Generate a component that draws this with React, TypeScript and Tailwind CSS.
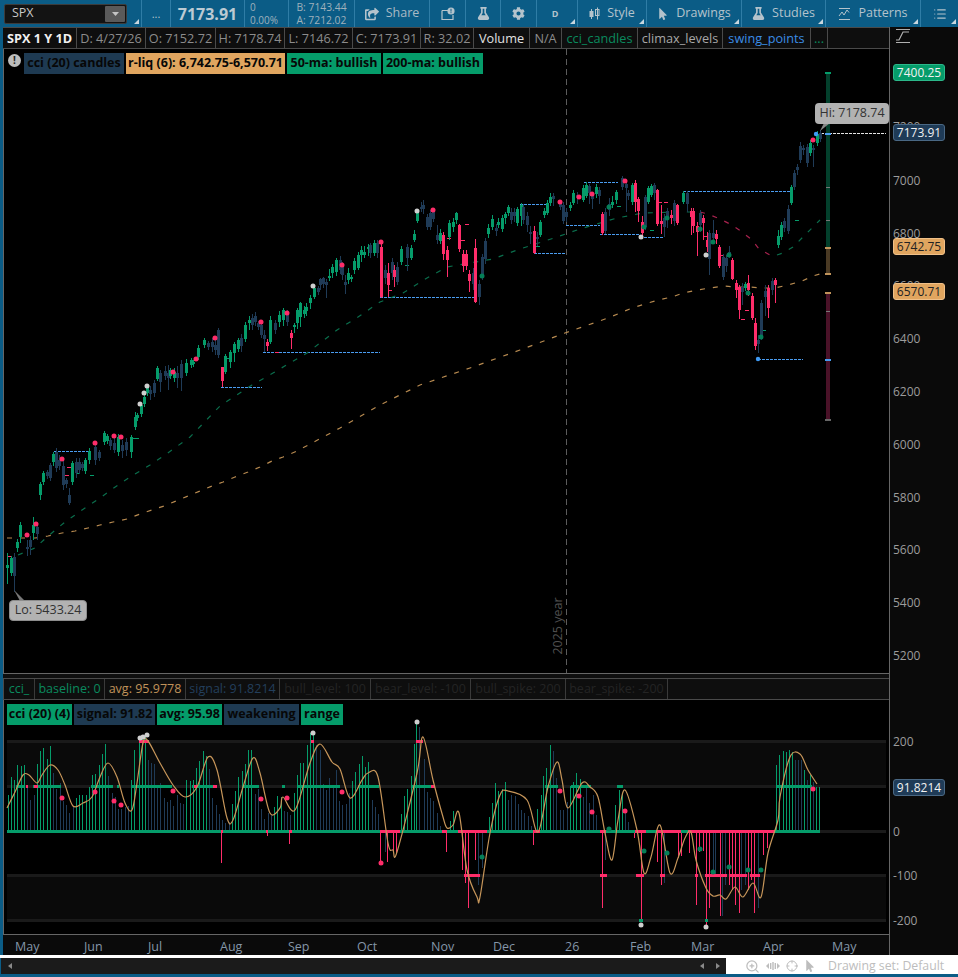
import React from "react";
import { FaFlask, FaCog, FaMousePointer, FaShareSquare } from "react-icons/fa";
import { ZoomIn, Crosshair, List } from "lucide-react";

type C = [number, number, number, string, number?, number?];
const G = "#059c6a", N = "#1f3b57", R = "#ff2d6a";
const candles: C[] = [
  [7,565,568,"g",553,584],[11,558,573,"g"],[14,557,576,"n",553,592],[17,542,548,"g",539,552],[20,525,537,"g",522,543],[27,547,549,"n",540,556],[30,540,547,"n",536,555],[33,525,533,"g",517,540],[37,527,534,"n",522,540],
  [40,484,495,"g",482,500],[43,473,482,"g"],[47,472,476,"n"],[50,465,478,"n"],[53,454,462,"g",452,466],[56,452,468,"n",448,472],[59,460,466,"n",455,470],[63,466,485,"n",460,490],[66,480,484,"n",478,488],[69,495,503,"n",488,505],[72,463,482,"g"],[76,462,473,"n",458,478],[79,462,470,"n",458,474],[82,464,468,"n"],[85,460,471,"g"],[89,451,460,"g",448,464],[95,447,460,"n",444,465],[99,452,458,"n"],[104,433,442,"g"],[107,436,441,"g"],[110,440,446,"n",438,450],[114,443,450,"n",438,453],[118,437,452,"g",434,456],[122,445,451,"n",440,458],[126,442,450,"n",438,456],[131,437,452,"g",435,458],
  [135,417,427,"g",412,430],[137,415,418,"g"],[141,405,414,"g"],[144,397,404,"g"],[147,388,393,"g"],[150,390,394,"n",386,400],[154,383,393,"n",380,397],[157,368,379,"g",366,381],[160,373,382,"n",370,392],[165,371,376,"n",366,380],[168,373,378,"n",365,390],[170,370,376,"g"],[174,372,378,"g",368,382],[177,373,378,"n",366,388],[181,364,378,"n",360,391],[186,363,373,"g",359,376],[191,360,365,"g"],[193,362,364,"g"],[198,348,357,"g",345,360],[204,340,345,"g"],[208,343,347,"n"],[212,342,347,"n",338,352],[215,345,350,"n",340,355],[218,330,355,"n",328,358],
  [222,367,381,"r",367,387],[225,356,372,"g",354,374],[230,352,362,"g",350,368],[234,344,353,"g",342,362],[238,340,349,"g"],[241,338,346,"n",334,352],[245,325,339,"g",322,342],[249,320,323,"g",316,330],[252,318,325,"n",314,330],[255,316,322,"n",312,326],[258,323,327,"n"],[261,325,335,"n",322,338],[264,335,339,"n",330,352],[267,342,346,"r",339,351],[270,320,342,"g",316,344],[275,323,330,"n",320,334],[279,315,322,"g",311,327],[283,310,320,"g",308,326],[287,315,322,"n",310,326],[291,333,338,"r",330,349],[294,325,327,"g",323,333],[297,310,323,"g",308,329],[300,303,317,"g",302,327],[304,310,314,"g",306,318],[306,307,311,"g",303,316],[310,298,303,"g",295,309],[314,288,297,"g",286,299],[318,288,292,"n"],[320,279,285,"n",278,290],[323,278,284,"n",277,288],[326,282,285,"n",279,298],[329,276,278,"g",269,281],[332,267,273,"g",264,278],[336,260,272,"g",258,276],[340,260,270,"n",256,274],[342,265,275,"n",262,280],[345,282,285,"n",275,294],[348,273,280,"g",268,284],[351,277,279,"g"],[354,261,270,"g",258,274],[358,255,268,"g",252,270],[361,250,255,"g",246,262],[364,252,255,"g",246,258],[368,247,249,"g",244,256],[370,245,253,"n",243,258],[374,243,253,"g",240,256],[377,243,253,"n",240,258],
  [381,247,297,"r",242,298],[385,270,278,"n",265,284],[388,273,285,"r",263,297],[392,262,273,"n",258,280],[394,270,277,"r",265,287],[397,267,282,"n",262,285],[401,249,262,"g",246,265],[407,247,258,"n",244,271],[411,248,258,"g",245,260],[414,234,240,"g",230,242],[417,212,221,"g",210,223],[421,207,209,"n",202,212],[423,205,209,"n",200,214],[427,217,227,"n",214,230],[430,213,227,"n",210,230],[433,212,219,"n",208,222],[437,235,240,"n",225,244],[440,233,241,"g",229,244],[443,235,254,"r",232,260],[447,250,260,"r",246,277],[449,223,237,"g",220,240],[453,222,227,"g",218,232],[456,213,220,"g",212,224],[459,225,249,"r",224,252],[463,254,266,"r",250,272],[466,254,266,"r",250,270],[469,274,281,"r",270,292],[473,273,284,"n",268,290],[475,248,302,"r",239,303],[479,284,297,"n",280,305],[482,257,275,"n",254,280],[485,241,259,"n",238,264],[488,228,234,"g",224,238],[492,219,227,"g",215,230],[496,228,231,"n",224,236],[498,222,225,"g",218,228],[502,218,229,"g",215,232],[505,214,218,"g",212,224],[508,207,213,"g",205,216],[511,212,220,"n",208,224],[514,212,216,"n",208,222],[517,209,223,"g",207,226],[521,205,216,"g",203,226],[523,207,220,"n",204,224],[527,216,225,"n",212,232],[530,232,234,"n",226,244],[534,231,253,"r",226,254],[537,237,239,"n",232,246],[540,222,235,"g",220,237],[544,211,215,"g",208,218],[547,203,213,"g",200,215],[550,197,203,"g",193,206],[553,196,199,"n",193,206],[560,204,207,"n",200,210],[563,205,221,"n",202,224],[566,212,217,"n",208,222],
  [570,205,208,"g",202,211],[573,193,203,"g",190,205],[577,195,198,"n",192,204],[583,188,200,"g",185,202],[586,185,196,"g",182,198],[589,186,193,"n",184,204],[592,195,199,"n",192,209],[596,187,194,"g",184,198],[599,190,196,"n",187,204],[602,214,233,"r",212,235],[605,212,231,"n",208,234],[609,204,210,"n",198,216],[612,202,205,"g",196,208],[616,192,200,"g",190,204],[622,178,187,"n",176,190],[626,184,188,"n",180,212],[628,193,196,"n",190,200],[632,185,202,"g",183,205],[635,183,202,"r",180,212],[638,199,211,"r",197,222],[642,222,233,"r",216,236],[645,197,227,"n",195,230],[648,188,202,"g",186,204],[651,186,195,"g",184,197],[654,185,193,"n",183,200],[657,190,224,"r",189,226],[661,221,224,"r",205,234],[664,218,227,"n",214,237],[667,211,220,"n",208,228],[671,215,218,"r",210,224],[674,203,221,"n",200,226],[677,205,223,"r",204,225],
  [683,193,202,"g",191,204],[687,193,204,"n",191,212],[691,211,217,"r",208,235],[693,211,226,"r",208,233],[697,226,232,"r",222,256],[700,213,225,"n",210,232],[703,218,223,"r",215,240],[707,240,247,"r",232,252],[709,233,259,"n",230,275],[713,233,238,"n",220,242],[716,234,239,"r",230,244],[719,247,266,"r",245,268],[723,257,277,"n",254,280],[726,258,266,"n",255,272],[729,252,255,"n",246,258],[732,260,279,"r",258,280],[736,283,290,"r",280,298],[739,287,310,"r",285,319],[742,287,292,"n",283,305],[745,284,288,"g"],[748,283,290,"r",275,296],[752,296,318,"r",293,320],[755,323,346,"r",318,350],[758,340,344,"n",335,353],[761,303,337,"n",300,340],[765,291,297,"n",285,316],[768,288,308,"r",285,318],[772,281,290,"n",278,295],[775,280,285,"r",278,303],[778,236,245,"g",230,248],[781,225,237,"g",222,240],[784,221,228,"n",218,232],[788,209,231,"n",205,234],[791,187,203,"g",185,205],[794,173,187,"n",170,190],[797,167,170,"n",164,175],[800,146,160,"n",142,163],[803,148,150,"n",145,155],[807,147,163,"n",144,167],[810,143,153,"g",140,156],[813,148,150,"n",145,167],[817,134,143,"g",131,146],[820,133,139,"n",130,142],
];
const col = (c: string) => (c === "g" ? G : c === "n" ? N : R);

const ma50A = "18,555 35,548 47,537 65,522 85,508 100,498 118,485 130,477 150,465 165,455 190,437 220,406 252,385 273,373 307,353 337,330 358,317 380,302 403,293 427,278 447,267 493,259 520,249 557,237 580,229 617,218 643,213 680,212 700,212";
const ma50R = "700,212 708,214 720,219 732,225 742,232 752,240 759,249 770,255 777,255";
const ma50B = "777,255 783,253 793,247 803,237 812,228 820,220";
const ma200 = "7,538 35,538 48,536 62,533 75,531 88,528 100,525 113,522 127,519 140,514 152,510 164,506 176,501 188,496 200,491 212,486 223,482 235,477 248,472 260,467 272,461 283,457 297,451 340,428 380,405 420,385 470,368 520,350 565,333 608,318 620,313 632,308 645,304 658,300 672,297 683,293 697,290 710,288 723,286 737,287 750,287 762,288 775,288 788,285 802,281 813,276 823,273";

const swing: [number, number, number][] = [[380,475,297],[534,566,253],[520,547,204],[566,600,225],[600,640,234],[640,663,237],[584,618,182],[263,380,352],[221,262,387],[54,90,451],[683,790,191],[758,803,359]];
const pinkDots = [[36,524],[27,535],[62,459],[95,443],[114,436],[121,437],[173,372],[196,359],[215,338],[261,322],[287,313],[342,265],[381,242],[433,210],[560,202],[579,197],[592,194],[625,181],[813,140]];
const whiteDots = [[140,404],[144,393],[147,386],[313,286],[417,211],[641,237],[706,255]];
const greenDots = [[482,276],[609,207],[644,227],[667,218],[700,229],[713,242],[729,255],[748,293],[761,337]];
const ticks: [number, number, string][] = [[7,556,R],[67,467,R],[65,475,R],[76,473,G],[133,438,G],[135,438,G],[90,475,G],[134,438,G],[275,352,R],[227,358,G],[405,265,G],[385,275,R],[388,290,R],[447,238,R],[465,224,R],[461,240,R],[536,246,G],[617,206,G],[704,236,R],[720,255,R],[664,202,R],[658,202,R],[745,310,R],[762,330,G],[795,220,G],[650,230,G],[741,319,R]];

const avg: [number, number][] = [[7,808],[15,792],[23,775],[29,775],[37,783],[42,775],[50,765],[58,770],[65,785],[73,806],[83,803],[92,797],[100,777],[108,763],[117,777],[125,803],[132,810],[137,783],[143,743],[148,741],[160,763],[173,785],[185,797],[197,787],[208,757],[217,770],[227,818],[233,820],[243,787],[253,758],[260,773],[270,813],[280,808],[283,797],[295,810],[310,763],[320,744],[332,762],[340,769],[350,798],[362,780],[368,773],[378,777],[388,843],[393,850],[397,852],[417,773],[423,737],[433,780],[443,817],[447,828],[453,825],[459,813],[467,870],[477,897],[480,897],[490,833],[500,795],[508,791],[527,800],[538,832],[548,787],[557,762],[562,780],[568,808],[582,783],[590,787],[598,797],[605,833],[612,860],[618,820],[625,790],[637,830],[644,873],[651,857],[660,825],[670,873],[678,858],[685,838],[691,832],[696,860],[706,888],[713,896],[720,895],[726,899],[735,887],[743,897],[753,883],[761,897],[768,853],[778,820],[780,797],[790,757],[800,754],[808,770],[817,784]];
const curve = (x: number) => {
  for (let i = 1; i < avg.length; i++) {
    if (x <= avg[i][0]) {
      const [a, b] = avg[i - 1];
      const [c, d] = avg[i];
      return b + ((x - a) / (c - a)) * (d - b);
    }
  }
  return avg[avg.length - 1][1];
};
const smooth = (pts: [number, number][]) => {
  let d = `M${pts[0][0]},${pts[0][1]}`;
  for (let i = 0; i < pts.length - 1; i++) {
    const p0 = pts[Math.max(0, i - 1)], p1 = pts[i], p2 = pts[i + 1], p3 = pts[Math.min(pts.length - 1, i + 2)];
    const c1x = p1[0] + (p2[0] - p0[0]) / 6, c1y = p1[1] + (p2[1] - p0[1]) / 6;
    const c2x = p2[0] - (p3[0] - p1[0]) / 6, c2y = p2[1] - (p3[1] - p1[1]) / 6;
    d += ` C${c1x.toFixed(1)},${c1y.toFixed(1)} ${c2x.toFixed(1)},${c2y.toFixed(1)} ${p2[0]},${p2[1]}`;
  }
  return d;
};
const rnd = (i: number) => {
  const v = Math.sin(i * 12.9898) * 43758.5453;
  return v - Math.floor(v);
};
const negBars: [number, number, string][] = [[221,863,R],[267,836,R],[289,844,R],[380,862,R],[387,862,R],[393,852,R],[396,853,R],[385,852,N],[442,833,R],[446,852,R],[462,870,R],[465,883,R],[468,908,R],[475,860,R],[478,885,N],[482,868,N],[533,845,R],[602,908,R],[605,860,N],[634,838,R],[641,922,R],[657,862,R],[661,885,R],[664,883,N],[678,858,R],[681,856,R],[689,853,R],[696,905,R],[699,852,R],[703,851,R],[706,925,R],[709,908,R],[713,875,N],[715,875,N],[720,916,R],[722,916,N],[725,885,N],[729,885,R],[732,890,R],[735,905,R],[739,913,R],[741,890,N],[745,885,N],[748,890,R],[751,880,R],[754,913,R],[758,908,N],[763,855,R],[767,848,R]];
const peaks: [number, number, string][] = [[139,739,G],[142,738,G],[145,737,G],[148,760,N],[313,733,G],[316,745,N],[416,722,G],[419,727,N],[550,745,G],[553,751,N],[546,768,G],[543,776,G],[556,778,N],[776,765,G],[779,755,G],[783,751,G],[786,752,G],[789,750,G],[792,752,G],[795,760,N],[798,760,N],[801,760,N],[804,770,G],[807,780,N],[810,775,G],[813,782,N],[816,787,G],[819,787,G]];
type Bar = { x: number; y: number; c: string };
const posBars: Bar[] = (() => {
  const out: Bar[] = [];
  for (let x = 7.5, i = 0; x < 690; x += 3.25, i++) {
    const rx = Math.round(x);
    const ahead = curve(x + 5);
    const rising = curve(x + 4) <= curve(x - 2);
    if (ahead >= 826) continue;
    if (peaks.some(p => Math.abs(p[0] - rx) < 2)) continue;
    if (negBars.some(p => Math.abs(p[0] - rx) < 1)) continue;
    const h = 831 - ahead;
    const k = rising ? 1.05 + rnd(i) * 0.3 : 0.55 + rnd(i) * 0.5;
    out.push({ x: rx, y: Math.max(725, 831 - h * k), c: rising ? G : N });
  }
  peaks.forEach(p => out.push({ x: p[0], y: p[1], c: p[2] }));
  return out;
})();

const zero: [number, number, string][] = [[7,221,G],[221,223,R],[223,266,G],[266,268,R],[268,289,G],[289,292,R],[292,380,G],[380,400,R],[400,442,G],[442,447,R],[447,458,G],[458,487,R],[487,533,G],[533,540,R],[540,600,G],[600,606,R],[606,635,G],[635,646,R],[646,657,G],[657,681,R],[681,688,G],[688,775,R],[775,820,G]];
const hund: [number, number, string][] = [[16,25,G],[26,28,R],[33,61,G],[34,38,R],[91,113,G],[117,119,G],[132,172,G],[192,194,G],[194,197,R],[197,214,G],[213,217,R],[243,259,G],[282,285,G],[298,340,G],[358,379,G],[412,431,G],[431,435,R],[545,558,G],[571,579,G],[581,591,G],[617,623,G],[776,812,G]];
const mhund: [number, number, string][] = [[464,480,R],[600,607,R],[636,644,R],[660,665,R],[695,698,R],[705,727,R],[730,747,R],[750,760,R]];
const p200: [number, number, string][] = [[139,149,R],[311,314,R],[416,423,R]];
const m200: [number, number, string][] = [[639,643,G],[705,708,G]];
const ciPink = [[62,798],[95,792],[114,801],[121,805],[173,791],[261,799],[287,798],[342,792],[560,791],[579,796],[592,812],[625,811],[813,789],[381,863]];
const ciGreen = [[482,857],[644,851],[667,853],[700,849],[713,872],[729,867],[748,870],[761,870],[609,829]];
const ciWhite = [[140,738],[143,737],[147,735],[313,733],[417,722],[641,925],[706,927]];

const levels = [741, 786, 831, 875, 920];

function Corner() {
  return (
    <svg width="5" height="5" className="absolute right-[2px] bottom-[3px]">
      <polygon points="5,0 5,5 0,5" fill="#c8d6de" />
    </svg>
  );
}
function Cell({ w, corner, children }: { w: string; corner?: boolean; children: React.ReactNode }) {
  return (
    <div className={`relative flex items-center justify-center gap-[7px] h-full border-r border-[#2f7da6] text-[12.5px] text-[#b4c3cc] ${w}`}>
      {children}
      {corner && <Corner />}
    </div>
  );
}

const head: [string, string][] = [
  ["SPX 1 Y 1D", "w-[74px] font-bold text-[#f0f0f0]"],
  ["D: 4/27/26", "w-[69px] text-[#8c8c8c]"],
  ["O: 7152.72", "w-[70px] text-[#8c8c8c]"],
  ["H: 7178.74", "w-[69px] text-[#8c8c8c]"],
  ["L: 7146.72", "w-[68px] text-[#8c8c8c]"],
  ["C: 7173.91", "w-[68px] text-[#8c8c8c]"],
  ["R: 32.02", "w-[53px] text-[#8c8c8c]"],
  ["Volume", "w-[56px] text-[#e2e2e2]"],
  ["N/A", "w-[32px] text-[#8c8c8c]"],
  ["cci_candles", "w-[76px] text-[#0a8a5e]"],
  ["climax_levels", "w-[85px] text-[#a8a8a8]"],
  ["swing_points", "w-[88px] text-[#3b8de6]"],
  ["...", "w-[17px] text-[#0a8a5e]"],
];
const legend: [string, string][] = [
  ["cci_", "w-[31px] text-[#0a8a5e]"],
  ["baseline: 0", "w-[70px] text-[#0a8a5e]"],
  ["avg: 95.9778", "w-[81px] text-[#c0935a]"],
  ["signal: 91.8214", "w-[94px] text-[#233f5c]"],
  ["bull_level: 100", "w-[91px] text-[#242424]"],
  ["bear_level: -100", "w-[100px] text-[#242424]"],
  ["bull_spike: 200", "w-[95px] text-[#242424]"],
  ["bear_spike: -200", "w-[102px] text-[#242424]"],
];
const axisTicks: [string, number][] = [["7200",127],["7000",181],["6800",234],["6600",286],["6400",339],["6200",392],["6000",445],["5800",498],["5600",550],["5400",603],["5200",656],["200",742],["0",832],["-100",876],["-200",921]];
const axisBadges: [string, number, string][] = [
  ["7400.25",72,"bg-[#059c6a] border-[#2cb88a] text-[#f2f2f2]"],
  ["7173.91",132,"bg-[#1f3b57] border-[#4a6884] text-[#f2f2f2]"],
  ["6742.75",246,"bg-[#e0a55f] border-[#f0c088] text-[#222]"],
  ["6570.71",291,"bg-[#e0a55f] border-[#f0c088] text-[#222]"],
  ["91.8214",787,"bg-[#1f3b57] border-[#4a6884] text-[#f2f2f2]"],
];
const months: [string, number][] = [["May",15],["Jun",84],["Jul",148],["Aug",220],["Sep",288],["Oct",357],["Nov",431],["Dec",493],["26",565],["Feb",630],["Mar",691],["Apr",763],["May",832]];
const badge = "h-[21px] flex items-center justify-center whitespace-nowrap text-[12.5px] font-bold text-[#070707]";

function Segs({ y, list }: { y: number; list: [number, number, string][] }) {
  return (
    <>
      {list.map((s, i) => (
        <rect key={i} x={s[0]} y={y - 1.5} width={s[1] - s[0]} height={3} fill={s[2]} />
      ))}
    </>
  );
}
function Dots({ list, fill, r = 2.5 }: { list: number[][]; fill: string; r?: number }) {
  return (
    <>
      {list.map((d, i) => (
        <circle key={i} cx={d[0]} cy={d[1]} r={r} fill={fill} />
      ))}
    </>
  );
}

export default function App() {
  return (
    <div className="w-[958px] h-[977px] overflow-hidden flex flex-col bg-[#0b5c86] font-['Open_Sans',sans-serif] leading-none">
      {/* toolbar */}
      <div className="h-[27px] flex items-stretch">
        <div className="relative w-[142px] h-full flex items-center pl-[4px] border-r border-[#2f7da6]">
          <div className="w-[123px] h-[20px] bg-[#131313] border border-[#3c3c3c] rounded-[2px] flex items-center justify-between pl-[7px] pr-[1px]">
            <span className="text-[12.5px] text-[#c8c8c8]">SPX</span>
            <span className="w-[20px] h-[16px] bg-[#5a5a5a] rounded-[1px] flex items-center justify-center">
              <svg width="7" height="4"><polygon points="0,0 7,0 3.5,4" fill="#c4c4c4" /></svg>
            </span>
          </div>
          <Corner />
        </div>
        <Cell w="w-[29px]"><span className="text-[#b4c3cc] text-[11px]">...</span></Cell>
        <Cell w="w-[74px]"><span className="text-[16px] font-bold text-[#bccad3]">7173.91</span></Cell>
        <Cell w="w-[44px]">
          <div className="flex flex-col gap-[3px] w-[33px] text-[10px] text-[#9fb1bc]"><span>0</span><span>0.00%</span></div>
        </Cell>
        <Cell w="w-[66px]">
          <div className="flex flex-col gap-[3px] text-[10.3px] text-[#9fb1bc]"><span>B: 7143.44</span><span>A: 7212.02</span></div>
        </Cell>
        <Cell w="w-[75px]"><FaShareSquare size={14} color="#b4c3cc" /><span className="text-[#a9bac5]">Share</span></Cell>
        <Cell w="w-[36px]">
          <svg width="14" height="14" viewBox="0 0 14 14"><path d="M1 3.5h7M1 3.5v9h11V8" fill="none" stroke="#b4c3cc" strokeWidth="1.2" /><circle cx="10" cy="4" r="3.6" fill="#b4c3cc" /><rect x="9.5" y="1.8" width="1" height="2.8" fill="#0b5c86" /><rect x="9.5" y="5.2" width="1" height="1" fill="#0b5c86" /></svg>
        </Cell>
        <Cell w="w-[35px]"><FaFlask size={13} color="#b4c3cc" /></Cell>
        <Cell w="w-[36px]"><FaCog size={13} color="#b4c3cc" /></Cell>
        <Cell w="w-[41px]" corner><span className="text-[9px] font-bold mr-[4px]">D</span></Cell>
        <Cell w="w-[69px]" corner>
          <svg width="11" height="13" viewBox="0 0 11 13"><rect x="0.5" y="4" width="4" height="6" fill="#b4c3cc" /><rect x="2" y="2" width="1" height="10" fill="#b4c3cc" /><rect x="6.5" y="2.5" width="3.5" height="6" fill="none" stroke="#b4c3cc" /><rect x="8" y="0.5" width="1" height="12" fill="#b4c3cc" /></svg>
          <span>Style</span>
        </Cell>
        <Cell w="w-[95px]" corner><FaMousePointer size={12} color="#b4c3cc" /><span>Drawings</span></Cell>
        <Cell w="w-[84px]" corner><FaFlask size={13} color="#b4c3cc" /><span>Studies</span></Cell>
        <Cell w="w-[95px]" corner>
          <svg width="13" height="13" viewBox="0 0 13 13" fill="none" stroke="#b4c3cc"><path d="M1 1.5h11M1 12.5h11" /><path d="M1 9l3-4 2 3 3-5 2 2.5" /></svg>
          <span>Patterns</span>
        </Cell>
        <div className="relative flex-1 flex items-center justify-center"><List size={14} color="#b4c3cc" /><Corner /></div>
      </div>

      {/* main */}
      <div className="h-[928px] flex pl-[3px]">
        <div className="w-[886px] flex flex-col bg-black">
          <div className="h-[22px] flex items-stretch bg-[#0e0e0e] border-y border-[#4a4a4a] text-[12.7px]">
            {head.map(h => (
              <div key={h[0]} className={`flex items-center justify-center border-r border-[#4a4a4a] whitespace-nowrap ${h[1]}`}>{h[0]}</div>
            ))}
          </div>
          <div className="relative h-[625px] bg-black border-b border-l border-[#666]">
            <svg width="885" height="624" className="block" shapeRendering="crispEdges">
              <g transform="translate(-4,-49)">
                <line x1="566" y1="49" x2="566" y2="674" stroke="#5c5c5c" strokeDasharray="6 4" />
                {swing.map((s, i) => (
                  <line key={i} x1={s[0]} x2={s[1]} y1={s[2] + 0.5} y2={s[2] + 0.5} stroke="#4a9cf0" strokeDasharray="3 1" />
                ))}
                <line x1="821" x2="886" y1="133.5" y2="133.5" stroke="#e4e4e4" strokeDasharray="3 1" />
                <g shapeRendering="geometricPrecision" fill="none" strokeWidth="1.2" strokeDasharray="5 8">
                  <polyline points={ma50A} stroke="#0a6e4c" />
                  <polyline points={ma50R} stroke="#a8224e" />
                  <polyline points={ma50B} stroke="#0a6e4c" />
                  <polyline points={ma200} stroke="#b78a50" />
                </g>
                {ticks.map((t, i) => (
                  <rect key={i} x={t[0]} y={t[1]} width={4} height={1} fill={t[2]} />
                ))}
                {candles.map((c, i) => (
                  <g key={i} fill={col(c[3])}>
                    <rect x={c[0]} y={c[4] ?? c[1] - 2} width={1} height={(c[5] ?? c[2] + 3) - (c[4] ?? c[1] - 2)} />
                    <rect x={c[0] - 1} y={c[1]} width={3} height={Math.max(1, c[2] - c[1])} />
                  </g>
                ))}
                <rect x="826" y="73" width="4" height="174" fill="#03402c" />
                <rect x="826" y="247" width="4" height="26" fill="#4a3a24" />
                <rect x="826" y="292" width="4" height="128" fill="#4a1228" />
                <rect x="825" y="72" width="6" height="2" fill="#059c6a" />
                <rect x="826" y="187" width="4" height="1" fill="#777" />
                <rect x="826" y="220" width="4" height="1" fill="#777" />
                <rect x="825" y="247" width="6" height="2" fill="#c0935a" />
                <rect x="825" y="273" width="6" height="2" fill="#c0935a" />
                <rect x="825" y="292" width="6" height="2" fill="#c0935a" />
                <rect x="826" y="311" width="4" height="1" fill="#777" />
                <rect x="825" y="419" width="6" height="2" fill="#666" />
                <rect x="825" y="133" width="6" height="2" fill="#4a9cf0" />
                <rect x="825" y="359" width="6" height="2" fill="#4a9cf0" />
                <g shapeRendering="geometricPrecision">
                  <Dots list={pinkDots} fill="#ff2d6a" />
                  <Dots list={whiteDots} fill="#cfcfcf" />
                  <Dots list={greenDots} fill="#057f58" />
                  <Dots list={[[758,359],[816,134]]} fill="#3f9bf5" r={2.2} />
                  <polygon points="14,590 20,601 25,601" fill="#777" />
                  <polygon points="820,131 824,123 830,123" fill="#888" />
                </g>
              </g>
            </svg>
            <div className="absolute left-[4px] top-[4px] flex items-center gap-[2px]">
              <div className="w-[13px] h-[13px] -mt-[7px] mr-[1px] rounded-full bg-[#bdbdbd] flex items-center justify-center text-[10px] font-bold text-[#222]">!</div>
              <span className={`${badge} w-[100px] bg-[#1e3a52]`}>cci (20) candles</span>
              <span className={`${badge} w-[159px] bg-[#e0a55f]`}>r-liq (6): 6,742.75-6,570.71</span>
              <span className={`${badge} w-[94px] bg-[#059c6a]`}>50-ma: bullish</span>
              <span className={`${badge} w-[100px] bg-[#059c6a]`}>200-ma: bullish</span>
            </div>
            <div className="absolute left-[5px] top-[551px] w-[78px] h-[21px] rounded-[4px] bg-[#b2b2b2] border border-[#8c8c8c] flex items-center justify-center text-[12.5px] text-[#333]">Lo: 5433.24</div>
            <div className="absolute left-[811px] top-[54px] w-[74px] h-[21px] rounded-[4px] bg-[#b2b2b2] flex items-center justify-center text-[12.5px] text-[#333]">Hi: 7178.74</div>
            <div className="absolute left-[524px] top-[570px] w-[60px] h-[14px] -rotate-90 flex items-center justify-center text-[12.5px] text-[#505050] whitespace-nowrap">2025 year</div>
          </div>
          <div className="h-[4px] bg-[#0e0e0e]" />
          <div className="h-[22px] flex items-stretch bg-[#0e0e0e] border-y border-[#4a4a4a] border-l text-[12.5px]">
            {legend.map(l => (
              <div key={l[0]} className={`flex items-center justify-center border-r border-[#3a3a3a] whitespace-nowrap ${l[1]}`}>{l[0]}</div>
            ))}
          </div>
          <div className="relative h-[235px] bg-black border-b border-l border-[#666]">
            <svg width="885" height="234" className="block" shapeRendering="crispEdges">
              <g transform="translate(-4,-700)">
                <rect x="7" y="741" width="879" height="45" fill="#0a0a0a" />
                <rect x="7" y="875" width="879" height="45" fill="#0a0a0a" />
                {levels.map(y => (
                  <rect key={y} x="7" y={y - 1.5} width="879" height="3" fill="#1a1a1a" />
                ))}
                {posBars.map((b, i) => (
                  <rect key={i} x={b.x} y={b.y} width={1} height={831 - b.y} fill={b.c === "g" ? G : b.c === "n" ? N : b.c} />
                ))}
                {negBars.map((b, i) => (
                  <rect key={i} x={b[0]} y={831} width={1} height={b[1] - 831} fill={b[2]} />
                ))}
                <Segs y={831} list={zero} />
                <Segs y={786} list={hund} />
                <Segs y={875} list={mhund} />
                <Segs y={741} list={p200} />
                <Segs y={920} list={m200} />
                <g shapeRendering="geometricPrecision">
                  <path d={smooth(avg)} fill="none" stroke="#c7965a" strokeWidth="1.2" strokeLinejoin="round" />
                  <Dots list={ciPink} fill="#ff2d6a" />
                  <Dots list={ciGreen} fill="#057f58" />
                  <Dots list={ciWhite} fill="#cfcfcf" />
                </g>
              </g>
            </svg>
            <div className="absolute left-[3px] top-[4px] flex gap-[2px]">
              <span className={`${badge} w-[65px] bg-[#059c6a]`}>cci (20) (4)</span>
              <span className={`${badge} w-[81px] bg-[#1e3a52]`}>signal: 91.82</span>
              <span className={`${badge} w-[65px] bg-[#059c6a]`}>avg: 95.98</span>
              <span className={`${badge} w-[75px] bg-[#1e3a52]`}>weakening</span>
              <span className={`${badge} w-[42px] bg-[#059c6a]`}>range</span>
            </div>
          </div>
          <div className="relative flex-1 bg-[#0a0a0a]">
            {months.map(m => (
              <span key={m[1]} className="absolute top-[6px] text-[12.5px] text-[#8496a8]" style={{ left: m[1] - 3 }}>{m[0]}</span>
            ))}
          </div>
        </div>
        <div className="relative flex-1 bg-[#0a0a0a] border-l border-[#666]">
          <svg width="16" height="16" viewBox="0 0 16 16" className="absolute left-[5px] top-[1px]" fill="none" stroke="#b0b0b0" strokeWidth="1.2">
            <path d="M1 1.5h14M1 14.5h14" /><path d="M1 12h3l4-8h6" />
          </svg>
          {axisTicks.map(t => (
            <span key={t[0]} className="absolute left-[3px] text-[12px] text-[#9c9c9c]" style={{ top: t[1] - 27 - 6 }}>{t[0]}</span>
          ))}
          {axisBadges.map(b => (
            <span key={b[0]} className={`absolute left-[3px] w-[52px] h-[17px] rounded-[3px] border flex items-center justify-center text-[12px] ${b[2]}`} style={{ top: b[1] - 27 - 8 }}>{b[0]}</span>
          ))}
        </div>
      </div>

      {/* footer */}
      <div className="h-[3px] bg-white" />
      <div className="h-[16px] flex">
        <div className="w-[725px] ml-[1px] bg-[#1b1b1b] flex items-center justify-between pl-[7px] pr-[6px]">
          <svg width="4" height="6"><polygon points="4,0 4,6 0,3" fill="#8a8a8a" /></svg>
          <div className="flex gap-[12px]">
            <svg width="4" height="6"><polygon points="4,0 4,6 0,3" fill="#8a8a8a" /></svg>
            <svg width="4" height="6"><polygon points="0,0 0,6 4,3" fill="#8a8a8a" /></svg>
          </div>
        </div>
        <div className="relative flex-1 bg-white flex items-center pl-[19px] gap-[6px] text-[#bdbdbd]">
          <ZoomIn size={15} color="#bdbdbd" />
          <svg width="14" height="8" viewBox="0 0 14 8" fill="#bdbdbd"><polygon points="0,4 3,1 3,7" /><rect x="4" y="1" width="1.4" height="6" /><rect x="6.3" y="0" width="1.4" height="8" /><rect x="8.6" y="1" width="1.4" height="6" /><polygon points="14,4 11,1 11,7" /></svg>
          <Crosshair size={12} color="#bdbdbd" />
          <FaMousePointer size={12} color="#bdbdbd" />
          <span className="ml-[6px] text-[12.3px] whitespace-nowrap">Drawing set: Default</span>
        </div>
      </div>
      <div className="h-[3px]" />
    </div>
  );
}
